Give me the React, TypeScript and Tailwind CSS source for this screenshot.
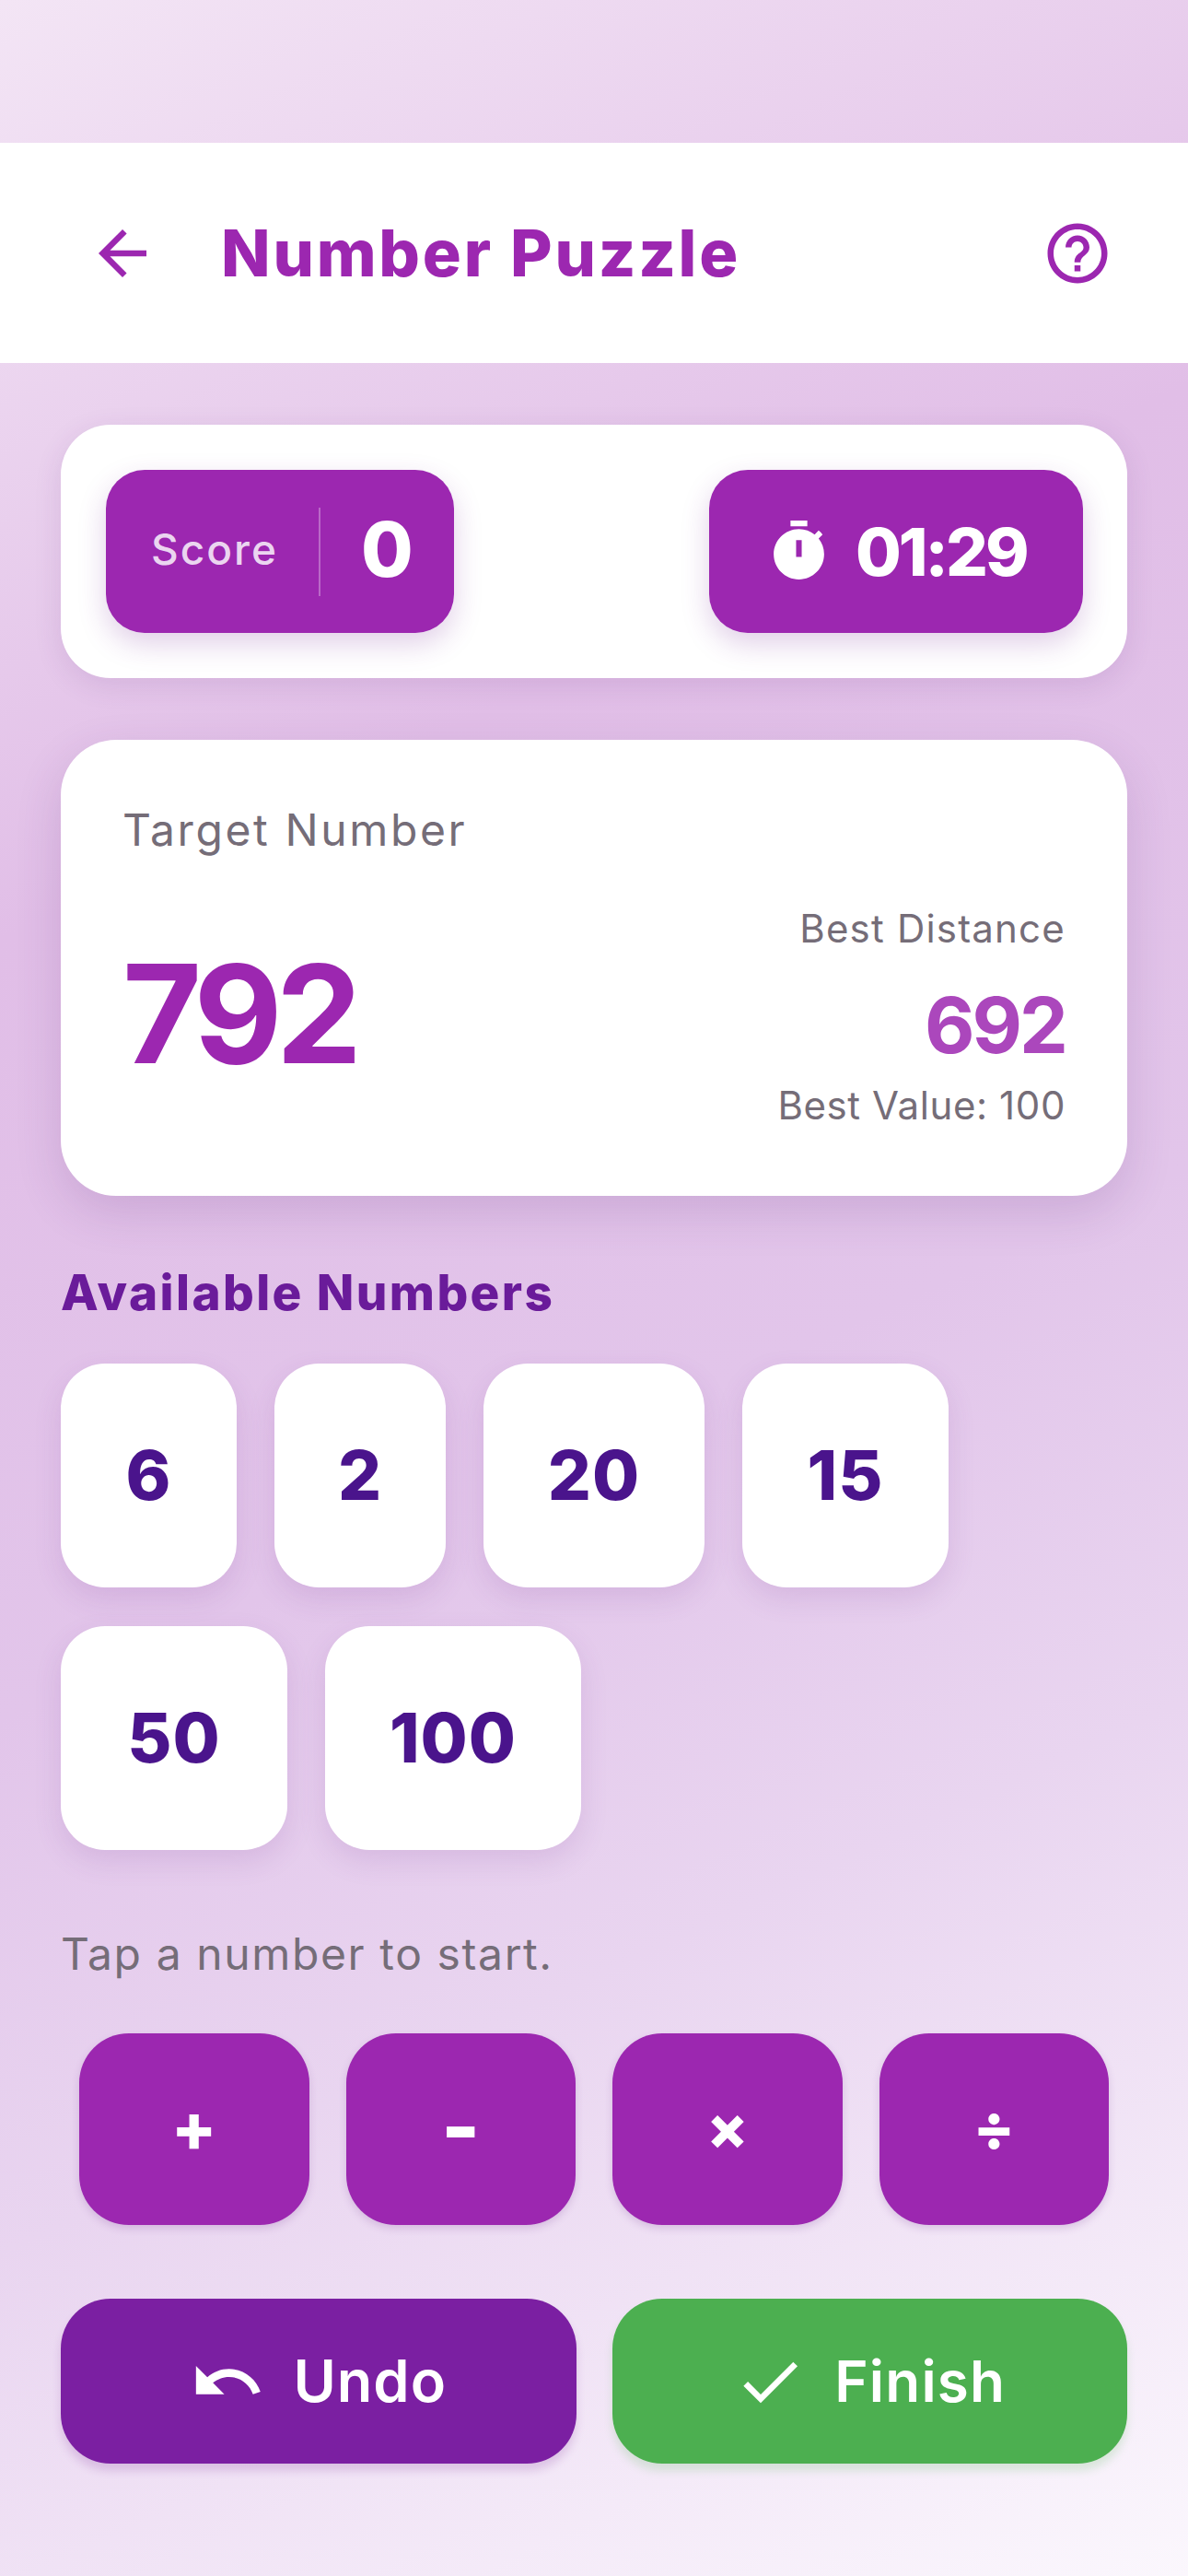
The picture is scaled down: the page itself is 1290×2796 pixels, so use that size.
const font = "font-['Inter','Liberation_Sans',sans-serif]";

function Icon({ d, className }: { d: string; className: string }) {
  return (
    <svg viewBox="0 0 24 24" fill="currentColor" className={className}>
      <path d={d} fillRule="evenodd" />
    </svg>
  );
}

const icons = {
  back: 'M20 11H7.83l5.59-5.59L12 4l-8 8 8 8 1.41-1.41L7.83 13H20v-2z',
  help: 'M11 18h2v-2h-2v2zm1-16C6.48 2 2 6.48 2 12s4.48 10 10 10 10-4.48 10-10S17.52 2 12 2zm0 18c-4.41 0-8-3.59-8-8s3.59-8 8-8 8 3.59 8 8-3.59 8-8 8zm0-14c-2.21 0-4 1.79-4 4h2c0-1.1.9-2 2-2s2 .9 2 2c0 2-3 1.75-3 5h2c0-2.25 3-2.5 3-5 0-2.21-1.79-4-4-4z',
  timer: 'M15 1H9v2h6V1zm-4 13h2V8h-2v6zm8.03-6.61l1.42-1.42c-.43-.51-.9-.99-1.41-1.41l-1.42 1.42C16.07 4.74 14.12 4 12 4c-4.97 0-9 4.03-9 9s4.02 9 9 9 9-4.03 9-9c0-2.12-.74-4.07-1.97-5.61z',
  undo: 'M12.5 8c-2.65 0-5.05.99-6.9 2.6L2 7v9h9l-3.62-3.62c1.39-1.16 3.16-1.88 5.12-1.88 3.54 0 6.55 2.31 7.6 5.5l2.37-.78C21.08 11.03 17.15 8 12.5 8z',
  check: 'M9 16.17L4.83 12l-1.42 1.41L9 19 21 7l-1.41-1.41z',
};

function Chip({ value, width }: { value: string; width: string }) {
  return (
    <div
      className={`flex h-[243px] items-center justify-center rounded-[48px] bg-white text-[74px] font-extrabold tracking-[1px] text-[#4A148C] shadow-[0_12px_30px_rgba(120,60,150,0.14)] ${width}`}
    >
      {value}
    </div>
  );
}

function OpButton({ label, size }: { label: string; size: string }) {
  return (
    <div
      className={`flex h-[208px] flex-1 items-center justify-center rounded-[54px] bg-[#9C27B0] pb-[4px] font-extrabold leading-none text-white shadow-[0_4px_8px_rgba(120,60,150,0.2)] ${size}`}
    >
      {label}
    </div>
  );
}

export default function App() {
  return (
    <div
      className={`${font} h-[2796px] w-[1290px] overflow-hidden bg-[linear-gradient(155deg,#F3E5F5_0%,#E1BEE7_30%,#E2C5EA_55%,#E9D5F0_72%,#FBF7FD_100%)] pt-[155px]`}
    >
      <header className="flex h-[239px] items-center justify-between bg-white pl-[94px] pr-[81px]">
        <div className="flex items-center gap-[68px]">
          <Icon d={icons.back} className="size-[78px] text-[#9C27B0]" />
          <h1 className="text-[70px] font-extrabold leading-none tracking-[2.8px] text-[#9C27B0]">Number Puzzle</h1>
        </div>
        <Icon d={icons.help} className="size-[78px] text-[#9C27B0]" />
      </header>

      <main className="px-[66px]">
        <section className="mt-[67px] flex h-[275px] items-center justify-between rounded-[54px] bg-white pl-[49px] pr-[48px] shadow-[0_8px_30px_rgba(90,40,120,0.12)]">
          <div className="flex h-[177px] w-[378px] items-center rounded-[42px] bg-[#9C27B0] pb-[4px] pl-[49px] shadow-[0_12px_30px_rgba(120,40,150,0.22)]">
            <span className="w-[138px] text-[46px] font-medium tracking-[2px] text-[#EBD5F0]">Score</span>
            <div className="ml-[44px] mt-[4px] h-[96px] w-[2px] bg-white/30" />
            <span className="ml-[44px] text-[82px] font-extrabold leading-none text-white">0</span>
          </div>
          <div className="flex h-[177px] w-[406px] items-center rounded-[42px] bg-[#9C27B0] pl-[61px] text-white shadow-[0_12px_30px_rgba(120,40,150,0.22)]">
            <Icon d={icons.timer} className="size-[73px]" />
            <span className="ml-[25px] text-[72px] font-extrabold leading-none tracking-[-3px]">01:29</span>
          </div>
        </section>

        <section className="mt-[67px] h-[495px] rounded-[60px] bg-white px-[67px] pt-[65px] shadow-[0_18px_50px_rgba(90,40,120,0.16)]">
          <p className="text-[48px] leading-[66px] tracking-[2.6px] text-[#756D78]">Target Number</p>
          <div className="mt-[45px] flex items-center justify-between">
            <span className="pb-[6px] text-[148px] font-bold leading-none tracking-[-7px] text-[#9C27B0]">792</span>
            <div className="flex flex-col items-end">
              <span className="text-[42px] leading-[58px] tracking-[1.2px] text-[#756D78]">Best Distance</span>
              <span className="mt-[26px] text-[84px] font-bold leading-[100px] tracking-[-3px] text-[#AB47BC]">692</span>
              <span className="mt-[8px] text-[42px] leading-[58px] tracking-[0.6px] text-[#756D78]">Best Value: 100</span>
            </div>
          </div>
        </section>

        <h2 className="mt-[75px] text-[53px] font-extrabold leading-[60px] tracking-[2.4px] text-[#6A1B9A]">Available Numbers</h2>

        <div className="mt-[47px] flex flex-wrap gap-x-[41px] gap-y-[42px]">
          <Chip value="6" width="w-[191px]" />
          <Chip value="2" width="w-[186px]" />
          <Chip value="20" width="w-[240px]" />
          <Chip value="15" width="w-[224px]" />
          <Chip value="50" width="w-[246px]" />
          <Chip value="100" width="w-[278px]" />
        </div>

        <p className="mt-[83px] text-[48px] leading-[60px] tracking-[1.6px] text-[#756D78]">Tap a number to start.</p>

        <div className="mt-[56px] flex gap-[40px] px-[20px]">
          <OpButton label="+" size="text-[72px]" />
          <OpButton label="-" size="text-[90px]" />
          <OpButton label="×" size="text-[66px]" />
          <OpButton label="÷" size="text-[66px]" />
        </div>

        <div className="mt-[80px] grid grid-cols-2 gap-[39px]">
          <div className="flex h-[179px] items-center justify-center gap-[30px] rounded-[54px] bg-[#7B1FA2] text-white shadow-[0_8px_10px_rgba(120,40,150,0.18)]">
            <Icon d={icons.undo} className="size-[82px]" />
            <span className="text-[63px] font-semibold leading-none tracking-[1px]">Undo</span>
          </div>
          <div className="flex h-[179px] items-center justify-center gap-[30px] rounded-[54px] bg-[#4CAF50] text-white shadow-[0_8px_10px_rgba(76,175,80,0.18)]">
            <Icon d={icons.check} className="size-[80px]" />
            <span className="text-[62px] font-semibold leading-none tracking-[1.2px]">Finish</span>
          </div>
        </div>
      </main>
    </div>
  );
}
